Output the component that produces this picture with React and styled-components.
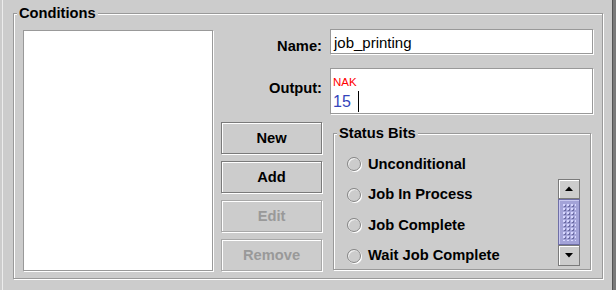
import React from "react";
import styled, { createGlobalStyle } from "styled-components";

const Global = createGlobalStyle`
  html, body { margin: 0; padding: 0; background: #cccccc; }
  body { font-family: "Liberation Sans", Arial, sans-serif; }
  * { box-sizing: border-box; }
`;

const Window = styled.div`
  width: 616px;
  height: 290px;
  display: flex;
  background: #cccccc;
  overflow: hidden;
`;

const LeftEdge = styled.div`
  flex: none;
  width: 3px;
  border-right: 1px solid #ececec;
`;

const RightEdge = styled.div`
  flex: none;
  width: 4px;
  background: #7a7a7a;
  border-left: 1px solid #555555;
`;

const Content = styled.div`
  flex: 1;
  padding: 5px 0 0 10px;
`;

const Group = styled.fieldset`
  margin: 0;
  margin-left: ${(p) => p.$ml || 0}px;
  margin-top: ${(p) => p.$mt || 0}px;
  padding: 0;
  min-width: 0;
  width: ${(p) => p.$w}px;
  border: 1px solid #999999;
  box-shadow: inset 1px 1px 0 #ffffff, 1px 1px 0 #ffffff;
  align-self: start;
`;

const Title = styled.legend`
  margin-left: 3px;
  padding: 0 2px;
  font: bold 14.7px/17px "Liberation Sans", Arial, sans-serif;
  color: #000;
  background: #cccccc;
`;

const Body = styled.div`
  display: grid;
  grid-template-columns: 190px 372px;
  column-gap: 8px;
  padding: 8px 9px 7px 9px;
`;

const ListBox = styled.div`
  height: 241px;
  background: #ffffff;
  border: 1px solid #999999;
  box-shadow: 1px 1px 0 #ffffff;
`;

const RightPane = styled.div`
  margin-top: -1px;
  display: grid;
  grid-template-columns: 101px 263px;
  column-gap: 8px;
  grid-template-rows: 25px 46px auto;
  row-gap: 14px;
`;

const Label = styled.div`
  justify-self: end;
  padding-top: ${(p) => p.$pt}px;
  font: bold 14.7px/17px "Liberation Sans", Arial, sans-serif;
  color: #000;
`;

const Field = styled.div`
  background: #ffffff;
  border: 1px solid #999999;
  box-shadow: 1px 1px 0 #ffffff;
  padding: ${(p) => p.$pad};
  font-family: "Liberation Sans", Arial, sans-serif;
  color: #000;
`;

const FieldText = styled.div`
  font-size: 15px;
  line-height: 17px;
`;

const Line = styled.div`
  color: ${(p) => p.$color};
  font-size: ${(p) => p.$size}px;
  line-height: ${(p) => p.$lh}px;
  margin-top: ${(p) => p.$mt || 0}px;
  white-space: pre;
  display: flex;
  align-items: center;
`;

const Caret = styled.span`
  display: inline-block;
  width: 1px;
  height: 21px;
  background: #000;
  margin-left: 3px;
`;

const Bottom = styled.div`
  grid-column: 1 / span 2;
  display: grid;
  grid-template-columns: 101px 263px;
  column-gap: 8px;
  margin-top: -6px;
`;

const Buttons = styled.div`
  display: flex;
  flex-direction: column;
  gap: 7px;
`;

const Button = styled.button`
  width: 101px;
  height: 32px;
  padding: 0;
  padding-top: 1px;
  margin: 0;
  background: #cccccc;
  border: 1px solid ${(p) => (p.disabled ? "#a8a8a8" : "#7a7a7a")};
  box-shadow: inset 1px 1px 0 #ffffff, 1px 1px 0 #ffffff;
  font: bold 14.7px/17px "Liberation Sans", Arial, sans-serif;
  color: ${(p) => (p.disabled ? "#999999" : "#000000")};
  border-radius: 0;
`;

const StatusBody = styled.div`
  display: flex;
  padding: 12px 10px 3px 13px;
`;

const RadioList = styled.div`
  display: flex;
  flex-direction: column;
  gap: 10.6px;
`;

const RadioRow = styled.label`
  height: 20px;
  display: flex;
  align-items: center;
  gap: 7px;
  white-space: nowrap;
  font: bold 14.7px/17px "Liberation Sans", Arial, sans-serif;
  color: #000;
`;

const RadioCircle = styled.span`
  flex: none;
  display: block;
  width: 14px;
  height: 14px;
  border-radius: 50%;
  border: 1px solid #858585;
  background: #cccccc;
  box-shadow: inset 1px 1px 0 #f4f4f4, 1px 1px 0 #ffffff;
`;

const ScrollBar = styled.div`
  margin-left: auto;
  flex: none;
  align-self: flex-end;
  width: 22px;
  height: 87px;
  display: flex;
  flex-direction: column;
`;

const ScrollButton = styled.div`
  flex: none;
  height: ${(p) => p.$h}px;
  border: 1px solid #7a7a7a;
  box-shadow: inset 1px 1px 0 #ffffff;
  background: #cccccc;
  display: flex;
  align-items: center;
  justify-content: center;
`;

const Thumb = styled.div`
  flex: 1;
  background: #a3a3d8;
  border: 1px solid #6e6ea6;
  box-shadow: inset 1px 1px 0 #c8c8f0;
  padding: 3px;
  display: flex;
`;

const Bumps = styled.div`
  flex: 1;
  background-image: radial-gradient(circle, #d8d8ff 0.7px, transparent 0.9px),
    radial-gradient(circle, #6a6aa2 0.7px, transparent 0.9px);
  background-size: 4px 4px, 4px 4px;
  background-position: 0 0, 1px 1px;
`;

const Arrow = ({ down }) => (
  <svg width="8" height="5" viewBox="0 0 8 5">
    {down ? <polygon points="0,0 8,0 4,4.5" fill="#000" /> : <polygon points="0,5 8,5 4,0.5" fill="#000" />}
  </svg>
);

export default function App() {
  const statuses = ["Unconditional", "Job In Process", "Job Complete", "Wait Job Complete"];
  return (
    <>
      <Global />
      <Window>
        <LeftEdge />
        <Content>
          <Group $w={590}>
            <Title>Conditions</Title>
            <Body>
              <ListBox />
              <RightPane>
                <Label $pt={9}>Name:</Label>
                <Field $pad="4px 2px 0 3px">
                  <FieldText>job_printing</FieldText>
                </Field>
                <Label $pt={12}>Output:</Label>
                <Field $pad="6px 2px 0 2px">
                  <Line $color="#ff0000" $size={11.5} $lh={14}>NAK</Line>
                  <Line $color="#3344bb" $size={16} $lh={21} $mt={2}>
                    15 <Caret />
                  </Line>
                </Field>
                <Bottom>
                  <Buttons>
                    <Button>New</Button>
                    <Button>Add</Button>
                    <Button disabled>Edit</Button>
                    <Button disabled>Remove</Button>
                  </Buttons>
                  <Group $w={258} $ml={3} $mt={3}>
                    <Title>Status Bits</Title>
                    <StatusBody>
                      <RadioList>
                        {statuses.map((s) => (
                          <RadioRow key={s}>
                            <RadioCircle />
                            {s}
                          </RadioRow>
                        ))}
                      </RadioList>
                      <ScrollBar>
                        <ScrollButton $h={20}>
                          <Arrow />
                        </ScrollButton>
                        <Thumb>
                          <Bumps />
                        </Thumb>
                        <ScrollButton $h={21}>
                          <Arrow down />
                        </ScrollButton>
                      </ScrollBar>
                    </StatusBody>
                  </Group>
                </Bottom>
              </RightPane>
            </Body>
          </Group>
        </Content>
        <RightEdge />
      </Window>
    </>
  );
}
